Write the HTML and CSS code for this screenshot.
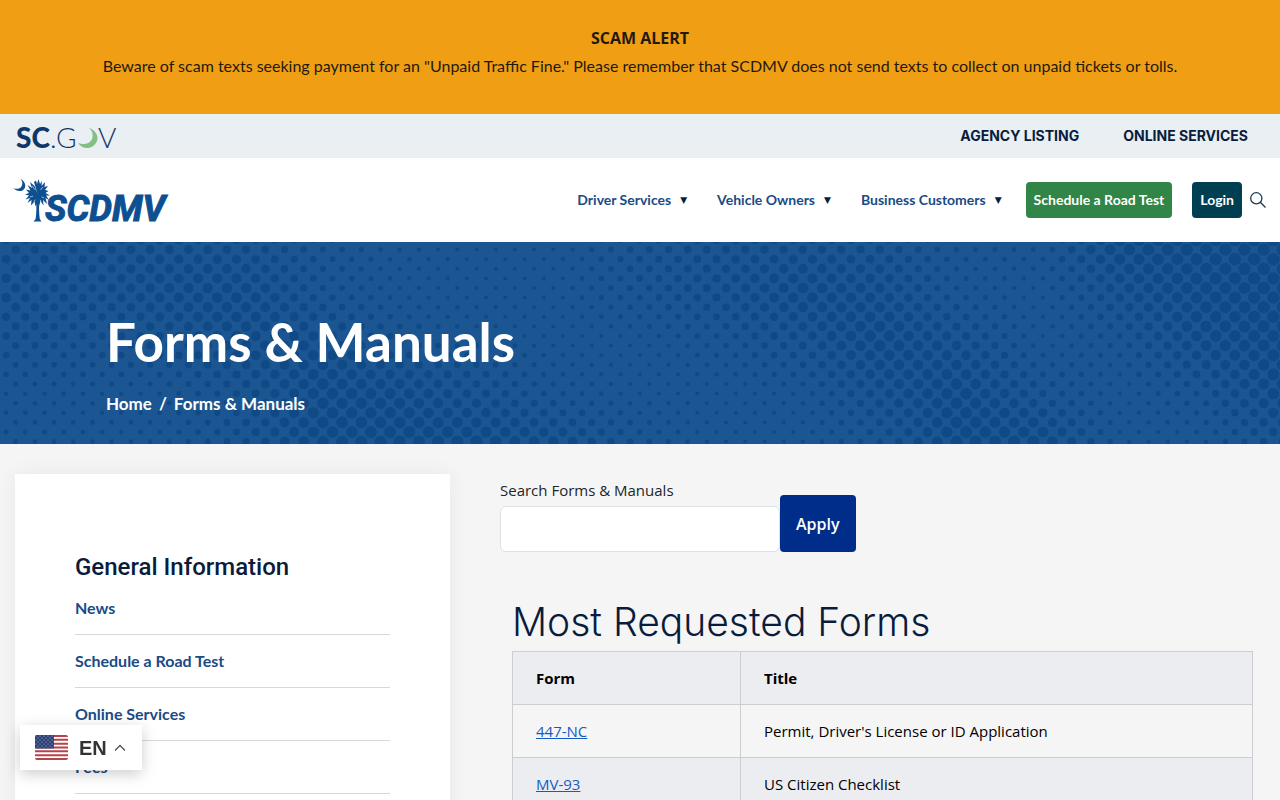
FILE: index.html
```html
<!DOCTYPE html>
<html lang="en">
<head>
<meta charset="utf-8">
<meta name="viewport" content="width=device-width, initial-scale=1">
<title>Forms &amp; Manuals | SCDMV</title>
<link rel="stylesheet" href="styles.css">
</head>
<body>
<section class="alert">
  <h2 class="alert-title">SCAM ALERT</h2>
  <p class="alert-text">Beware of scam texts seeking payment for an "Unpaid Traffic Fine." Please remember that SCDMV does not send texts to collect on unpaid tickets or tolls.</p>
</section>

<div class="utility">
  <a href="#" class="state-logo" aria-label="SC.GOV">
    <svg width="108" height="44" viewBox="0 0 108 44">
      <g class="state-word">
        <text x="0" y="34" class="state-bold">SC</text>
        <text x="34" y="34">.</text>
        <text x="40" y="34">G</text>
        <text x="82" y="34">V</text>
      </g>
      <path d="M73 14C80 16.500 84 23 80 29C76 35.500 66 36 62 28.500C67 31.500 73 30 75.500 26C78 21.500 76.500 17 73 14Z" fill="#84c086"/>
    </svg>
  </a>
  <nav class="utility-links">
    <a href="#">AGENCY LISTING</a>
    <a href="#">ONLINE SERVICES</a>
  </nav>
</div>

<header class="header">
  <a href="#" class="brand" aria-label="SCDMV home">
    <svg width="160" height="60" viewBox="0 -7 160 60">
      <g fill="#0d4f90">
        <path d="M8.500 2C12.500 4 14.500 8 12.500 11.500C10.500 15 5 15 1 11C4.500 12.500 8 12 9.500 9.500C11 7 10.500 4 8.500 2Z"/>
        <path d="M24 22H27.500C26.800 30 27 36 27.800 42L29.500 44.500H21.500L23.600 42C24.500 36 24.700 30 24 22Z"/>
        <path d="M25.500 17L22 5L24 3.500L25 7L26.500 2L28 7L30 4L29.500 9L33 5L32.500 10L36 9L33 13L36.500 14L33.500 16L38 18.500L34 18.500L37 23L33.500 21L35 27L31 23L31.500 28.500L28.500 24L27 29L25.500 25L23.500 29.500L22.500 24.500L19 28.500L19.500 23L15.500 26L18 21L13.500 22.500L17 18.500L13 17.500L17 16L14 12.500L18.500 13.500L15.500 8L20 11L18 5L22.500 9Z"/>
        <path d="M26 16L20 9M26 16L31 10M25 18L18 20M26 18L32 21M25 19L22 25M27 19L29 25" stroke="#fff" stroke-width="0.600" stroke-dasharray="0 4 9"/>
        <text x="33" y="44" class="brand-word">SCDMV</text>
      </g>
    </svg>
  </a>
  <nav class="menu">
    <button type="button" class="menu-item">Driver Services<span class="caret">▼</span></button>
    <button type="button" class="menu-item">Vehicle Owners<span class="caret">▼</span></button>
    <button type="button" class="menu-item">Business Customers<span class="caret">▼</span></button>
    <a href="#" class="cta cta-test">Schedule a Road Test</a>
    <a href="#" class="cta cta-login">Login</a>
    <button type="button" class="search-toggle" aria-label="Search">
      <svg width="16" height="16" viewBox="0 0 16 16" fill="none" stroke="#173a55" stroke-width="1.300"><circle cx="6.300" cy="6.300" r="5.600"/><path d="M10.300 10.300L15.500 15.500"/></svg>
    </button>
  </nav>
</header>

<section class="hero">
  <svg class="hero-dots" id="hero-dots" viewBox="0 0 1280 202" preserveAspectRatio="xMinYMin slice" aria-hidden="true"></svg>
  <div class="hero-body">
    <h1 class="hero-title">Forms &amp; Manuals</h1>
    <nav class="crumbs"><a href="#">Home</a><span>/</span><span>Forms &amp; Manuals</span></nav>
  </div>
</section>

<div class="content">
  <aside class="sidebar">
    <h2 class="sidebar-title">General Information</h2>
    <ul class="sidebar-list">
      <li><a href="#">News</a></li>
      <li><a href="#">Schedule a Road Test</a></li>
      <li><a href="#">Online Services</a></li>
      <li><a href="#">Fees</a></li>
    </ul>
  </aside>
  <main class="main">
    <form class="search-form">
      <div class="field">
        <label for="q">Search Forms &amp; Manuals</label>
        <input type="text" id="q" name="q">
      </div>
      <button type="submit" class="apply">Apply</button>
    </form>
    <section class="forms">
      <h2 class="forms-title">Most Requested Forms</h2>
      <table class="forms-table">
        <thead><tr><th scope="col" class="col-form">Form</th><th scope="col">Title</th></tr></thead>
        <tbody>
          <tr><td><a href="#">447-NC</a></td><td>Permit, Driver's License or ID Application</td></tr>
          <tr><td><a href="#">MV-93</a></td><td>US Citizen Checklist</td></tr>
        </tbody>
      </table>
    </section>
  </main>
</div>

<button type="button" class="language">
  <svg width="33" height="25" viewBox="0 0 33 25" aria-hidden="true">
    <defs>
      <clipPath id="flag-clip"><rect width="33" height="25" rx="2"/></clipPath>
      <pattern id="stars" width="4" height="4" patternUnits="userSpaceOnUse"><circle cx="1" cy="1" r="0.600" fill="#b8c6e2"/><circle cx="3" cy="3" r="0.600" fill="#b8c6e2"/></pattern>
    </defs>
    <g clip-path="url(#flag-clip)">
      <rect width="33" height="25" fill="#fff"/>
      <path d="M0 1H33M0 4.800H33M0 8.700H33M0 12.500H33M0 16.300H33M0 20.200H33M0 24H33" stroke="#b5434c" stroke-width="1.920"/>
      <rect width="19" height="13.500" fill="#2b4175"/>
      <rect width="19" height="13.500" fill="url(#stars)"/>
    </g>
  </svg>
  <span>EN</span>
  <svg width="12" height="8" viewBox="0 0 12 8" fill="none" stroke="#555" stroke-width="1.300" aria-hidden="true"><path d="M1 6.500L6 1.500L11 6.500"/></svg>
</button>
<script src="dots.js"></script>
</body>
</html>
```
FILE: styles.css
```css
* { box-sizing: border-box; }

body {
  margin: 0;
  background: #f5f5f5;
  color: #212529;
  font-family: "Open Sans", "Noto Sans", sans-serif;
  font-size: 15px;
  line-height: 24px;
}

h1, h2, p, ul { margin: 0; padding: 0; }
a { text-decoration: none; color: inherit; }
button { font: inherit; border: 0; background: none; padding: 0; cursor: pointer; }
svg { display: block; flex: none; }

.alert {
  background: #f09f14;
  color: #1f1a10;
  text-align: center;
  padding: 24px 16px 34px;
}
.alert-title { font: 700 16px/28px "Open Sans", sans-serif; }
.alert-text { font: 400 16px/28px Lato, sans-serif; }

.utility {
  display: flex;
  align-items: center;
  justify-content: space-between;
  min-height: 44px;
  padding: 0 32px 0 16px;
  background: #e9eff3;
}
.state-word { font-family: Lato, sans-serif; font-size: 28px; font-weight: 300; fill: #10376b; }
.state-bold { font-weight: 900; }
.utility-links { display: flex; gap: 44px; font: 700 14px/20px Inter, sans-serif; color: #0a1c3c; }

.header {
  display: flex;
  align-items: center;
  justify-content: space-between;
  min-height: 84px;
  padding: 0 14px 0 12px;
  background: #fff;
}
.brand-word { font: italic 700 36px Roboto, sans-serif; stroke: #0d4f90; stroke-width: 1px; }
.menu { display: flex; align-items: center; font: 700 14px/20px Lato, sans-serif; color: #1a4b85; }
.menu-item { display: flex; align-items: center; gap: 9px; margin-right: 30px; color: inherit; }
.caret { font: 9px/20px "DejaVu Sans", sans-serif; color: #0a1c3c; }
.cta { padding: 8px; border-radius: 4px; color: #fff; }
.cta-test { margin-left: -6px; margin-right: 20px; background: #318546; }
.cta-login { margin-right: 8px; background: #003e52; }

.hero { position: relative; background: #1b5692; color: #fff; overflow: hidden; }
.hero-dots { position: absolute; inset: 0; width: 100%; height: 100%; fill: #0f4a86; }
.hero-body { position: relative; padding: 64px 106px 28px; }
.hero-title { font: 700 53px/72px Lato, sans-serif; }
.crumbs { display: flex; gap: 7px; margin-top: 14px; font: 700 17px/24px Lato, sans-serif; }

.content { display: grid; grid-template-columns: 435fr 780fr; gap: 50px; padding: 30px 0 0 15px; }

.sidebar { background: #fff; padding: 76px 60px 60px; box-shadow: 0 0 20px rgba(0, 0, 0, 0.06); }
.sidebar-title { font: 500 24px/34px Roboto, sans-serif; color: #0a1c3c; }
.sidebar-list { list-style: none; font: 700 16px/24px Lato, sans-serif; color: #1a4b85; }
.sidebar-list li { padding: 14px 0; border-bottom: 1px solid #d8d8d8; }
.sidebar-list li:first-child { padding-top: 12px; }

.main { padding-top: 4px; }
.search-form { display: flex; align-items: flex-end; }
.field { display: flex; flex-direction: column; gap: 4px; width: 280px; }
.field input { height: 46px; border: 1px solid #dee2e6; border-radius: 6px; background: #fff; padding: 8px 12px; font: inherit; }
.apply { height: 57px; padding: 0 16px; border-radius: 4px; background: #002d8a; color: #fff; font-weight: 600; font-size: 16px; }

.forms { padding: 47px 27px 0 12px; }
.forms-title { font: 300 39px/46px Inter, sans-serif; color: #0a1c3c; }
.forms-table { width: 100%; margin-top: 6px; border-collapse: collapse; color: #000; }
.forms-table th, .forms-table td { border: 1px solid #cbcdd1; padding: 14px 23px; text-align: left; }
.forms-table th, .forms-table tr:nth-child(even) td { background: #ecedf1; }
.forms-table a { color: #155bc4; text-decoration: underline; }
.col-form { width: 228px; }

.language {
  position: fixed;
  left: 20px;
  bottom: 30px;
  display: flex;
  align-items: center;
  height: 45px;
  padding: 0 16px 0 15px;
  background: #fff;
  color: #333;
  font: 700 20px/24px "Liberation Sans", Arial, sans-serif;
  box-shadow: 0 4px 14px rgba(0, 0, 0, 0.2);
}
.language span { margin: 0 7px 0 11px; }
```
FILE: dots.js
```js
// Halftone backdrop: dot radii sampled every 80 x 50 units and blended between samples.
const radii = [
  [4, 4, 4.5, 4, 3, 2.2, 2, 2, 3.5, 4, 4, 3.8, 2.5, 2.5, 6, 6.2, 6.2],
  [5, 4, 5, 5.5, 3.2, 2.2, 2, 2, 3.2, 4.2, 5.5, 5, 2.5, 2, 4.5, 6, 6.2],
  [3.5, 3.3, 3.8, 5.2, 5, 3, 2.3, 2, 2, 2.7, 4, 6, 4.5, 2, 2.7, 5.5, 6.2],
  [2.2, 2.2, 2.2, 3.5, 5.8, 5.5, 4, 2.5, 2, 2, 2.2, 4.5, 6, 3.5, 2, 3, 6],
  [2.5, 2.3, 2.3, 3.5, 5.8, 6, 6, 5, 3, 2, 2, 3, 6, 6, 2.2, 2, 4]
];

function radiusAt(x, y) {
  const u = Math.min(Math.max(x / 80, 0), 15.99);
  const v = Math.min(Math.max(y / 50, 0), 3.99);
  const i = Math.floor(u), j = Math.floor(v), a = u - i, b = v - j;
  const top = radii[j][i] * (1 - a) + radii[j][i + 1] * a;
  const low = radii[j + 1][i] * (1 - a) + radii[j + 1][i + 1] * a;
  return top * (1 - b) + low * b;
}

const svg = document.getElementById("hero-dots");
const pitch = 9.6;
for (let row = 0; row < 23; row++) {
  const y = -2 + row * pitch;
  for (let x = row % 2 ? 15.7 : 6.1; x < 1290; x += pitch * 2) {
    const dot = document.createElementNS("http://www.w3.org/2000/svg", "circle");
    dot.setAttribute("cx", x.toFixed(1));
    dot.setAttribute("cy", y.toFixed(1));
    dot.setAttribute("r", radiusAt(x, y).toFixed(1));
    svg.appendChild(dot);
  }
}
```
